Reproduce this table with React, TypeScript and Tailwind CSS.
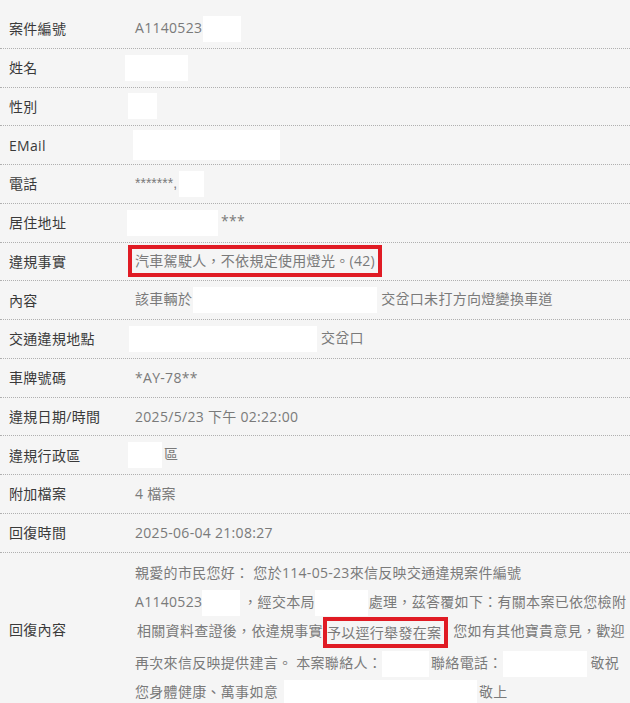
import React from 'react';

const Blank: React.FC<{ w: number; className?: string }> = ({ w, className = '' }) => (
  <span
    className={`inline-block h-[26px] bg-white align-middle ${className}`}
    style={{ width: w }}
  />
);

const Row: React.FC<{ label: string; children?: React.ReactNode }> = ({ label, children }) => (
  <div className="flex h-[38.75px] items-center border-b border-dotted border-[#b0b0b0]">
    <div className="w-[135px] shrink-0 pl-[9px] text-[#3a3a3a]">{label}</div>
    <div className="flex-1 whitespace-nowrap text-[#7a7a7a]">{children}</div>
  </div>
);

const App: React.FC = () => {
  return (
    <div className="min-h-screen bg-[#f5f5f5] pt-[10px] font-['Open_Sans','Noto_Sans_CJK_TC',sans-serif] text-[14px] tracking-[0.3px]">
      <Row label="案件編號">
        A1140523
        <Blank w={38} className="ml-[1px]" />
      </Row>
      <Row label="姓名">
        <Blank w={63} className="-ml-[10px]" />
      </Row>
      <Row label="性別">
        <Blank w={29} className="-ml-[7px]" />
      </Row>
      <Row label="EMail">
        <Blank w={147} className="-ml-[2px] h-[30px]" />
      </Row>
      <Row label="電話">
        <span className="font-['Liberation_Sans'] tracking-normal">*******,</span>
        <Blank w={25} className="ml-[2px]" />
      </Row>
      <Row label="居住地址">
        <Blank w={91} className="-ml-[8px]" />
        <span className="ml-[3px]">***</span>
      </Row>
      <Row label="違規事實">
        <span className="-ml-[7px] inline-block border-4 border-[#e01b24] px-[3px] leading-[24px]">
          汽車駕駛人，不依規定使用燈光。(42)
        </span>
      </Row>
      <Row label="內容">
        該車輛於
        <Blank w={184} className="ml-[1px]" />
        <span className="ml-[4px]">交岔口未打方向燈變換車道</span>
      </Row>
      <Row label="交通違規地點">
        <Blank w={188} className="-ml-[6px]" />
        <span className="ml-[4px]">交岔口</span>
      </Row>
      <Row label="車牌號碼">*AY-78**</Row>
      <Row label="違規日期/時間">2025/5/23 下午 02:22:00</Row>
      <Row label="違規行政區">
        <Blank w={34} className="-ml-[7px]" />
        <span className="ml-[2px]">區</span>
      </Row>
      <Row label="附加檔案">4 檔案</Row>
      <Row label="回復時間">2025-06-04 21:08:27</Row>
      <div className="flex items-center">
        <div className="w-[135px] shrink-0 pl-[9px] text-[#3a3a3a]">回復內容</div>
        <div className="flex-1 whitespace-nowrap pt-[5px] leading-[29px] text-[#7a7a7a]">
          <div>親愛的市民您好： 您於114-05-23來信反映交通違規案件編號</div>
          <div>
            A1140523
            <Blank w={38} />
            <span className="ml-[3px]">，經交本局</span>
            <Blank w={53} />
            <span className="ml-[1px]">處理，茲答覆如下：有關本案已依您檢附</span>
          </div>
          <div>
            <span className="ml-[2px]">相關資料查證後，依違規事實</span>
            <span className="inline-block border-4 border-[#e01b24] pl-0 pr-[3px] align-middle leading-[23px]">
              予以逕行舉發在案
            </span>
            <span className="ml-[5px]">您如有其他寶貴意見，歡迎</span>
          </div>
          <div>
            再次來信反映提供建言。 本案聯絡人：
            <Blank w={47} />
            <span className="ml-[2px]">聯絡電話：</span>
            <Blank w={84} />
            <span className="ml-[4px]">敬祝</span>
          </div>
          <div>
            您身體健康、萬事如意
            <Blank w={193} className="ml-[6px]" />
            <span className="ml-[2px]">敬上</span>
          </div>
        </div>
      </div>
    </div>
  );
};

export default App;
